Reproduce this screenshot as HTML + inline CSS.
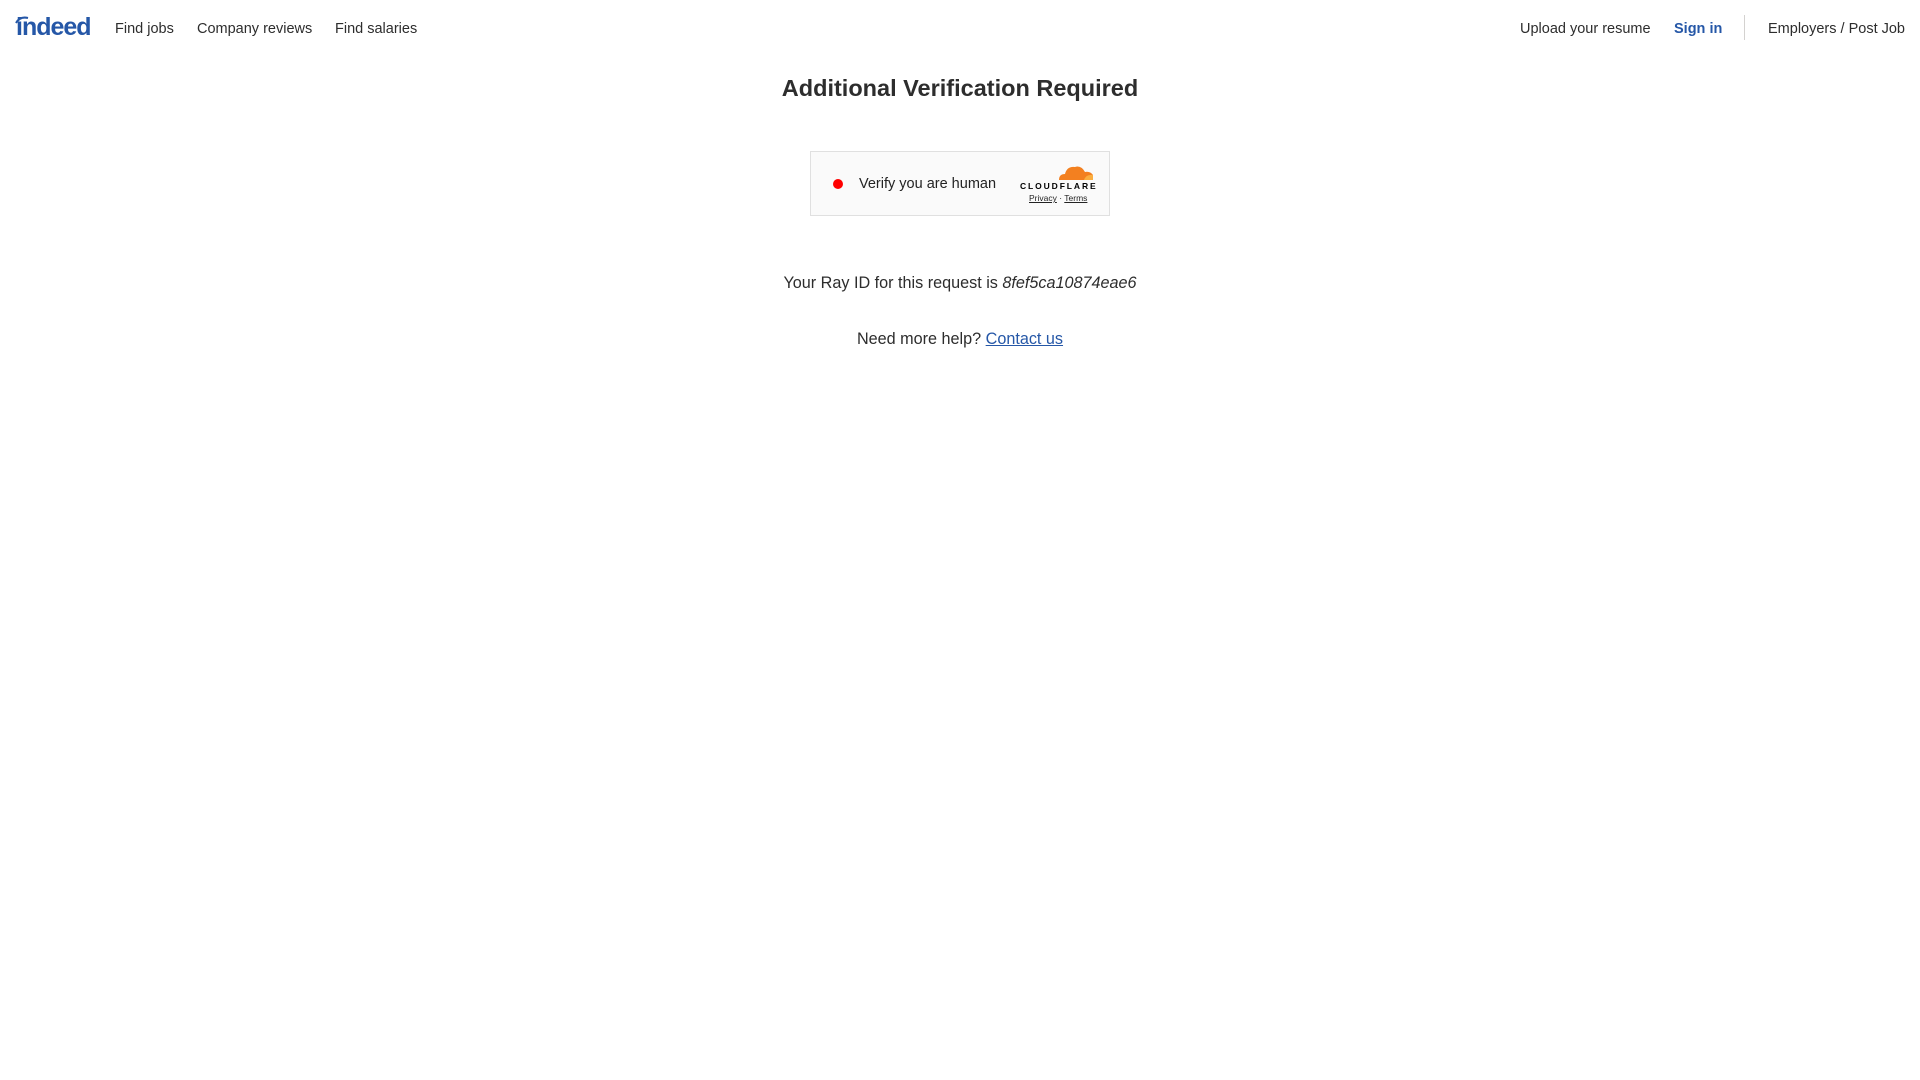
<!DOCTYPE html>
<html><head><meta charset="utf-8"><style>
*{margin:0;padding:0;box-sizing:border-box}
body{width:1920px;height:1080px;background:#fff;font-family:"Liberation Sans",Arial,sans-serif;color:#2d2d2d;position:relative;overflow:hidden}
.a{position:absolute;white-space:nowrap}
.nav{font-size:14.5px;top:21px}
</style></head><body>
<div class="a" style="left:16px;top:13px;font-size:25px;font-weight:bold;color:#2557a7;letter-spacing:-1px">indeed</div>
<svg class="a" style="left:15px;top:16px" width="14" height="8" viewBox="0 0 14 8"><path d="M1 7 Q5 0 13 2" stroke="#2557a7" stroke-width="2" fill="none"/></svg>
<div class="a nav" style="left:115px">Find jobs</div>
<div class="a nav" style="left:197px">Company reviews</div>
<div class="a nav" style="left:335px">Find salaries</div>
<div class="a nav" style="left:1520px">Upload your resume</div>
<div class="a nav" style="left:1674px;color:#2557a7;font-weight:bold">Sign in</div>
<div class="a" style="left:1744px;top:15px;width:1px;height:25px;background:#d4d2d0"></div>
<div class="a nav" style="left:1768px">Employers / Post Job</div>

<div class="a" style="left:0;width:1920px;text-align:center;top:75px;font-size:23.5px;font-weight:bold">Additional Verification Required</div>

<div class="a" style="left:810px;top:151px;width:300px;height:65px;background:#fafafa;border:1px solid #e0e0e0"></div>
<div class="a" style="left:833px;top:179px;width:10px;height:10px;border-radius:50%;background:#f00"></div>
<div class="a" style="left:859px;top:176px;font-size:14.5px;color:#232323">Verify you are human</div>
<svg class="a" style="left:1056px;top:163px" width="40" height="18" viewBox="0 0 40 18"><path d="M3 17 Q3 11 9 11 Q11 3 19 4 Q25 2 29 9 Q34 8 37 12 L37 17 Z" fill="#f38020"/><path d="M28 17 Q30 11 37 12 L37 17Z" fill="#faae40"/></svg>
<div class="a" style="left:1020px;top:181px;font-size:8.5px;font-weight:bold;letter-spacing:1.9px;color:#000">CLOUDFLARE</div>
<div class="a" style="left:1029px;top:193px;font-size:8.5px;color:#232323"><u>Privacy</u> · <u>Terms</u></div>

<div class="a" style="left:0;width:1920px;text-align:center;top:274px;font-size:16.2px">Your Ray ID for this request is <i>8fef5ca10874eae6</i></div>
<div class="a" style="left:0;width:1920px;text-align:center;top:330px;font-size:16.2px">Need more help? <span style="color:#2557a7;text-decoration:underline">Contact us</span></div>
</body></html>
